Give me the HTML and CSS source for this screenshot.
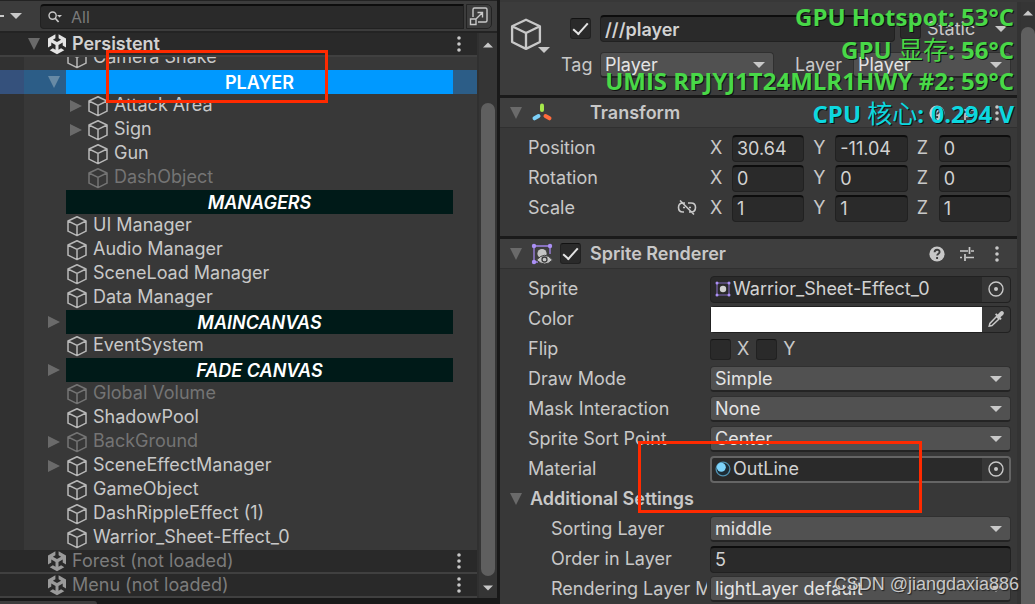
FILE: index.html
```html
<!DOCTYPE html>
<html lang="en">
<head>
<meta charset="utf-8">
<title>Editor</title>
<link rel="stylesheet" href="styles.css">
</head>
<body>
<svg class="defs" aria-hidden="true">
  <symbol id="cube" viewBox="0 0 22 22"><path d="M11 1.8 20 6v10.2L11 20.6 2 16.2V6ZM2 6l9 4.4L20 6M11 10.4v10.2" fill="none" stroke="currentColor" stroke-width="1.5" stroke-linejoin="round"/></symbol>
  <symbol id="unity" viewBox="0 0 22 22"><path d="M9.4 1.2v4L6.9 6.7l4.1 2.4 4.1-2.4-2.5-1.5v-4L20 5.6v9l-3.3-2v-3l-4.2 2.5v4.7l2.6-1.5 3.2 1.9L11 21.2l-7.3-4 3.2-1.9 2.6 1.5v-4.7L5.3 9.6v3l-3.3 2v-9Z" fill="currentColor"/></symbol>
  <symbol id="down" viewBox="0 0 12 6"><path d="M0 0h12L6 6Z" fill="currentColor"/></symbol>
  <symbol id="open" viewBox="0 0 12 12"><path d="M0 0h12L6 12Z" fill="currentColor"/></symbol>
  <symbol id="closed" viewBox="0 0 12 12"><path d="M0 0v12L12 6Z" fill="currentColor"/></symbol>
  <symbol id="dots" viewBox="0 0 4 16"><path d="M2 2v0M2 8v0M2 14v0" stroke="currentColor" stroke-width="3.6" stroke-linecap="round"/></symbol>
  <symbol id="help" viewBox="0 0 16 16"><circle cx="8" cy="8" r="7.6" fill="currentColor"/><path d="M5.6 6.2c0-3.4 5-3.2 5-.3 0 1.8-2.4 1.7-2.4 3.6M8.1 11v2" fill="none" stroke="#3c3c3c" stroke-width="1.9"/></symbol>
  <symbol id="sliders" viewBox="0 0 16 16"><path d="M1 5h8M12 5h3M10.500 1v7M1 11.500h2M7 11.500h8M6 8v7" fill="none" stroke="currentColor" stroke-width="1.7"/></symbol>
  <symbol id="target" viewBox="0 0 16 16"><circle cx="8" cy="8" r="7" fill="none" stroke="currentColor" stroke-width="1.4"/><circle cx="8" cy="8" r="2" fill="currentColor"/></symbol>
</svg>

<div class="app">
  <section class="hierarchy">
    <div class="toolbar">
      <button class="add" aria-label="Create"><span class="dash"></span><svg class="caret"><use href="#down"/></svg></button>
      <label class="search">
        <svg class="lens" viewBox="0 0 14 12"><circle cx="4.6" cy="4.6" r="3.6" fill="none" stroke="currentColor" stroke-width="1.4"/><path d="m7 7 3.6 4" stroke="currentColor" stroke-width="1.8"/><path d="M9 4h5l-2.500 2.600Z" fill="currentColor"/></svg>
        <input type="text" placeholder="All" aria-label="Search">
      </label>
      <button class="popout" aria-label="Open search window"><svg viewBox="0 0 20 20"><path d="M4 11V3.500Q4 2 5.500 2H16.500Q18 2 18 3.500V14.500Q18 16 16.500 16H9M1.500 13h5.500v5.500H1.500ZM7 13l6.500-6.500M8.500 6.500h5v5" fill="none" stroke="currentColor" stroke-width="1.4"/></svg></button>
    </div>
    <div class="tree-area">
      <div class="tree">
        <div class="scene loaded"><button class="toggle" aria-label="Collapse"><svg><use href="#open"/></svg></button><svg class="icon"><use href="#unity"/></svg><span>Persistent</span><button class="dots" aria-label="Scene menu"><svg><use href="#dots"/></svg></button></div>
        <ul class="nodes">
          <li class="node cut"><i class="toggle"></i><svg class="icon"><use href="#cube"/></svg><span>Camera Shake</span></li>
          <li class="node selected"><button class="toggle" aria-label="Collapse"><svg><use href="#open"/></svg></button><strong class="band">PLAYER</strong></li>
          <li class="node deep"><button class="toggle" aria-label="Expand"><svg><use href="#closed"/></svg></button><svg class="icon"><use href="#cube"/></svg><span>Attack Area</span></li>
          <li class="node deep"><button class="toggle" aria-label="Expand"><svg><use href="#closed"/></svg></button><svg class="icon"><use href="#cube"/></svg><span>Sign</span></li>
          <li class="node deep"><i class="toggle"></i><svg class="icon"><use href="#cube"/></svg><span>Gun</span></li>
          <li class="node deep off"><i class="toggle"></i><svg class="icon"><use href="#cube"/></svg><span>DashObject</span></li>
          <li class="node"><i class="toggle"></i><strong class="band">MANAGERS</strong></li>
          <li class="node"><i class="toggle"></i><svg class="icon"><use href="#cube"/></svg><span>UI Manager</span></li>
          <li class="node"><i class="toggle"></i><svg class="icon"><use href="#cube"/></svg><span>Audio Manager</span></li>
          <li class="node"><i class="toggle"></i><svg class="icon"><use href="#cube"/></svg><span>SceneLoad Manager</span></li>
          <li class="node"><i class="toggle"></i><svg class="icon"><use href="#cube"/></svg><span>Data Manager</span></li>
          <li class="node"><button class="toggle" aria-label="Expand"><svg><use href="#closed"/></svg></button><strong class="band">MAINCANVAS</strong></li>
          <li class="node"><i class="toggle"></i><svg class="icon"><use href="#cube"/></svg><span>EventSystem</span></li>
          <li class="node"><button class="toggle" aria-label="Expand"><svg><use href="#closed"/></svg></button><strong class="band">FADE CANVAS</strong></li>
          <li class="node off"><i class="toggle"></i><svg class="icon"><use href="#cube"/></svg><span>Global Volume</span></li>
          <li class="node"><i class="toggle"></i><svg class="icon"><use href="#cube"/></svg><span>ShadowPool</span></li>
          <li class="node off"><button class="toggle" aria-label="Expand"><svg><use href="#closed"/></svg></button><svg class="icon"><use href="#cube"/></svg><span>BackGround</span></li>
          <li class="node"><button class="toggle" aria-label="Expand"><svg><use href="#closed"/></svg></button><svg class="icon"><use href="#cube"/></svg><span>SceneEffectManager</span></li>
          <li class="node"><i class="toggle"></i><svg class="icon"><use href="#cube"/></svg><span>GameObject</span></li>
          <li class="node"><i class="toggle"></i><svg class="icon"><use href="#cube"/></svg><span>DashRippleEffect (1)</span></li>
          <li class="node"><i class="toggle"></i><svg class="icon"><use href="#cube"/></svg><span>Warrior_Sheet-Effect_0</span></li>
        </ul>
        <div class="scene"><i class="toggle"></i><svg class="icon"><use href="#unity"/></svg><span>Forest (not loaded)</span><button class="dots" aria-label="Scene menu"><svg><use href="#dots"/></svg></button></div>
        <div class="scene"><i class="toggle"></i><svg class="icon"><use href="#unity"/></svg><span>Menu (not loaded)</span><button class="dots" aria-label="Scene menu"><svg><use href="#dots"/></svg></button></div>
      </div>
      <div class="scrollbar">
        <svg class="caret up"><use href="#down"/></svg>
        <div class="thumb"></div>
        <svg class="caret"><use href="#down"/></svg>
      </div>
    </div>
    <div class="dock"><div class="dock-tab"></div></div>
  </section>

  <section class="inspector">
    <div class="props">
      <header class="object">
        <button class="object-icon" aria-label="Object icon"><svg class="big"><use href="#cube"/></svg><svg class="caret small"><use href="#down"/></svg></button>
        <div class="object-fields">
          <div class="line">
            <input type="checkbox" class="check" checked aria-label="Active">
            <input type="text" class="text name" value="///player" aria-label="Name">
            <label class="static"><input type="checkbox" class="check">Static</label>
            <svg class="caret static-caret"><use href="#down"/></svg>
          </div>
          <div class="line">
            <label class="tag" for="tag">Tag</label>
            <span class="pick tag-pick"><select id="tag"><option>Player</option></select><svg class="caret"><use href="#down"/></svg></span>
            <label class="layer" for="layer">Layer</label>
            <span class="pick layer-pick"><select id="layer"><option>Player</option></select><svg class="caret"><use href="#down"/></svg></span>
          </div>
        </div>
      </header>

      <header class="component">
        <button class="toggle" aria-label="Collapse"><svg><use href="#open"/></svg></button>
        <svg class="kind" viewBox="0 0 22 22"><g stroke-width="4" stroke-linecap="round"><path d="M11 3.500v4.500" stroke="#a5e84b"/><path d="m7.500 14-4 2.300" stroke="#7cd0f8"/><path d="m14.500 14 4 2.300" stroke="#ff6b3d"/></g></svg>
        <h2 class="after-blank">Transform</h2>
        <span class="tools"><svg class="tool"><use href="#help"/></svg><svg class="tool"><use href="#sliders"/></svg><svg class="more"><use href="#dots"/></svg></span>
      </header>
      <div class="body transform">
        <div class="row"><span class="label">Position</span><div class="vector"><label>X<input class="text" value="30.64"></label><label>Y<input class="text" value="-11.04"></label><label>Z<input class="text" value="0"></label></div></div>
        <div class="row"><span class="label">Rotation</span><div class="vector"><label>X<input class="text" value="0"></label><label>Y<input class="text" value="0"></label><label>Z<input class="text" value="0"></label></div></div>
        <div class="row"><span class="label">Scale<svg class="unlink" viewBox="0 0 20 16"><path d="M8 3H6Q1.500 3 1.500 7.500T6 12H7M11 3h3q4.500 0 4.500 4.500T14 12h-2M6 7.500h2M12 7.500h2M3 .5l14 14" fill="none" stroke="currentColor" stroke-width="1.600"/></svg></span><div class="vector"><label>X<input class="text" value="1"></label><label>Y<input class="text" value="1"></label><label>Z<input class="text" value="1"></label></div></div>
      </div>

      <header class="component">
        <button class="toggle" aria-label="Collapse"><svg><use href="#open"/></svg></button>
        <svg class="kind" viewBox="0 0 22 22"><path d="M3 3h16v8M3 3v16h4" fill="none" stroke="#a184e8" stroke-width="1.300"/><g fill="#ab90f5"><circle cx="3" cy="3" r="2.200"/><circle cx="19" cy="3" r="2.200"/><circle cx="3" cy="19" r="2.200"/></g><circle cx="11" cy="10.500" r="4.600" fill="#c4c4c4"/><path d="M5.500 17q8.500-9.500 16 0-7.500 8-16 0Z" fill="#c4c4c4" stroke="#3c3c3c"/><circle cx="13.500" cy="16.500" r="2.500" fill="none" stroke="#3c3c3c" stroke-width="1.300"/></svg>
        <input type="checkbox" class="check" checked aria-label="Enable Sprite Renderer">
        <h2>Sprite Renderer</h2>
        <span class="tools"><svg class="tool"><use href="#help"/></svg><svg class="tool"><use href="#sliders"/></svg><svg class="more"><use href="#dots"/></svg></span>
      </header>
      <div class="body">
        <div class="row"><span class="label">Sprite</span><div class="object-ref"><svg class="mini" viewBox="0 0 16 16"><path d="M2 2h12v12H2Z" fill="none" stroke="#7d67b5" stroke-width="1.200"/><g fill="#ab90f5"><circle cx="2" cy="2" r="1.500"/><circle cx="14" cy="2" r="1.500"/><circle cx="2" cy="14" r="1.500"/><circle cx="14" cy="14" r="1.500"/></g><circle cx="8" cy="8" r="3.200" fill="#d0d0d0"/></svg><span>Warrior_Sheet-Effect_0</span><button aria-label="Select sprite"><svg><use href="#target"/></svg></button></div></div>
        <div class="row"><span class="label">Color</span><div class="object-ref color"><button class="swatch" aria-label="Color"></button><button aria-label="Pick color"><svg viewBox="0 0 16 16"><path d="m8.500 5.500 2.500 2.500-7 6.500-2.800.6.700-2.700Z" fill="none" stroke="currentColor" stroke-width="1.500"/><path d="M7 3.500 8.200 2.300 9.700 3.600 12 1q2-1.600 3.300-.3T15 4l-2.600 2.300 1.300 1.500L12.500 9Z" fill="currentColor"/></svg></button></div></div>
        <div class="row"><span class="label">Flip</span><div class="flip"><label><input type="checkbox" class="check">X</label><label><input type="checkbox" class="check">Y</label></div></div>
        <div class="row"><label class="label" for="mode">Draw Mode</label><span class="pick"><select id="mode"><option>Simple</option></select><svg class="caret"><use href="#down"/></svg></span></div>
        <div class="row"><label class="label" for="mask">Mask Interaction</label><span class="pick"><select id="mask"><option>None</option></select><svg class="caret"><use href="#down"/></svg></span></div>
        <div class="row"><label class="label" for="sort">Sprite Sort Point</label><span class="pick"><select id="sort"><option>Center</option></select><svg class="caret"><use href="#down"/></svg></span></div>
        <div class="row"><span class="label">Material</span><div class="object-ref focus"><svg class="mini" viewBox="0 0 16 16"><circle cx="8" cy="8" r="6.900" fill="#1d2c36" stroke="#4f8fae" stroke-width="1.300"/><circle cx="6.300" cy="6.300" r="4.500" fill="#7dd3fa"/></svg><span>OutLine</span><button aria-label="Select material"><svg><use href="#target"/></svg></button></div></div>
        <div class="row group"><button class="toggle" aria-label="Collapse"><svg><use href="#open"/></svg></button><h3>Additional Settings</h3></div>
        <div class="row"><label class="label nested" for="slayer">Sorting Layer</label><span class="pick"><select id="slayer"><option>middle</option></select><svg class="caret"><use href="#down"/></svg></span></div>
        <div class="row"><label class="label nested" for="order">Order in Layer</label><input class="text wide" id="order" value="5"></div>
        <div class="row"><label class="label nested" for="rmask">Rendering Layer Mask</label><span class="pick"><select id="rmask"><option>lightLayer default</option></select><svg class="caret"><use href="#down"/></svg></span></div>
      </div>
    </div>
    <div class="scrollbar right">
      <svg class="caret up"><use href="#down"/></svg>
      <div class="thumb"></div>
    </div>
  </section>
</div>

<div class="mark mark-player"></div>
<div class="mark mark-material"></div>
<div class="monitor">
  <div>GPU Hotspot: 53°C</div>
  <div>GPU <span class="han">显存</span>: 56°C</div>
  <div>UMIS RPJYJ1T24MLR1HWY #2: 59°C</div>
  <div class="cpu">CPU <span class="han">核心</span>: 0.294 V</div>
</div>
<div class="watermark">CSDN @jiangdaxia886</div>
</body>
</html>
```
FILE: styles.css
```css
* { box-sizing: border-box; }
body {
  margin: 0;
  background: #191919;
  color: #c8c8c8;
  font: 18px/24px Inter, "Noto Sans CJK SC", sans-serif;
  overflow: hidden;
}
button, input, select { font: inherit; color: inherit; margin: 0; }
button { padding: 0; border: 0; background: none; display: flex; align-items: center; justify-content: center; }
h2, h3 { margin: 0; font-size: 18px; font-weight: 600; }
svg { flex: none; display: block; }
.defs { position: absolute; width: 0; height: 0; }

.app { display: grid; grid-template-columns: 497fr 538fr; height: 100vh; overflow: hidden; }
.caret { width: 12px; height: 6px; color: #c8c8c8; }
.up { transform: rotate(180deg); }
.toggle { width: 16px; height: 22px; flex: none; color: #6a6a6a; }
.toggle svg { width: 12px; height: 12px; }

/* Hierarchy */
.hierarchy { display: flex; flex-direction: column; min-width: 0; background: #383838; }
.toolbar {
  display: flex; align-items: center; height: 33px; flex: none; padding-right: 5px;
  background: #3c3c3c; border-top: 1px solid #232323; border-bottom: 2px solid #232323;
}
.add { width: 40px; justify-content: flex-start; gap: 6px; }
.dash { width: 4px; height: 2px; background: #c8c8c8; }
.search {
  display: flex; align-items: center; flex: 1; height: 25px; gap: 9px; padding-left: 7px; margin-right: 2px;
  background: #2a2a2a; border: 1px solid #212121; border-top: 2px solid #0d0d0d; border-radius: 4px 0 0 4px;
}
.lens { width: 14px; height: 12px; }
.search input { flex: 1; min-width: 0; padding: 0; border: 0; background: none; outline: 0; font-size: 16px; }
.search input::placeholder { color: #7a7a7a; opacity: 1; }
.popout { width: 26px; height: 25px; border: 1px solid #232323; border-radius: 0 5px 5px 0; }
.popout svg { width: 20px; height: 20px; }

.tree-area { display: flex; flex: 1; min-height: 0; }
.tree { flex: 1; min-width: 0; }
.scene {
  display: flex; align-items: center; height: 24px; padding: 0 16px 0 26px;
  background: #292929; border-bottom: 2px solid #404040; color: #7c7c7c;
}
.scene .icon { margin: 0 4px; width: 22px; height: 22px; color: #9a9a9a; }
.loaded { color: #d2d2d2; font-weight: 600; }
.loaded .icon { color: #e4e4e4; }
.dots { margin-left: auto; width: 4px; height: 16px; color: #c8c8c8; }
.dots svg { width: 4px; height: 16px; }

.nodes { margin: 0; padding: 0; list-style: none; overflow: hidden; background: linear-gradient(90deg, #313131 24px, #383838 24px); }
.node { display: flex; align-items: center; height: 24px; padding-left: 46px; white-space: nowrap; }
.node span { padding-bottom: 2px; }
.node .icon { width: 22px; height: 22px; margin: 0 5px 0 4px; color: #b8b8b8; }
.deep { padding-left: 68px; }
.deep .icon { margin-left: 3px; }
.cut { margin-top: -11px; }
.off, .off .icon { color: #747474; }
.band {
  flex: 1; height: 24px; margin: 0 24px 0 4px; padding-top: 1px; background: #001a18; color: #fff;
  font-style: italic; font-weight: 600; text-align: center;
}
.selected { background: linear-gradient(90deg, #35517c 24px, #2c5d87 24px); }
.selected .band { background: #0099ff; font-style: normal; }
.selected .toggle { color: #688aa5; }

.scrollbar { display: flex; flex-direction: column; align-items: center; flex: none; width: 20px; padding: 9px 0 7px; background: #353535; border-left: 2px solid #303030; }
.thumb { flex: 1; width: 14px; margin: 55px 0 9px; border-radius: 7px; background: #5f5f5f; }
.scrollbar .caret { width: 10px; }
.dock { height: 6px; flex: none; padding-top: 3px; background: #191919; }
.dock-tab { width: 97px; height: 3px; border-radius: 0 4px 0 0; background: #3c3c3c; }

/* Inspector */
.inspector { display: flex; min-width: 0; padding-top: 2px; border-left: 3px solid #191919; background: #383838; overflow: hidden; }
.props { flex: 1; min-width: 0; }
.object { display: flex; height: 93px; padding: 13px 6px 0 10px; background: #3c3c3c; }
.object-icon { position: relative; width: 32px; height: 38px; margin-right: 19px; }
.big { width: 34px; height: 34px; }
.small { position: absolute; right: -8px; bottom: 0; }
.object-fields { display: grid; grid-template-columns: minmax(0, 1fr); flex: 1; min-width: 0; gap: 9px; align-content: start; }
.line { display: flex; align-items: center; height: 27px; }
.line > .check { margin-left: 9px; }
.name { flex: 1; font-weight: 600; margin: 0 5px 0 9px; }
.static { display: flex; align-items: center; gap: 6px; width: 91px; }
.static-caret { margin-right: 4px; margin-left: 4px; }
.tag { width: 39px; }
.tag-pick { margin-right: 21px; }
.layer { width: 58px; }
.pick.layer-pick { flex: 0 1 158px; }

.check {
  appearance: none; flex: none; width: 21px; height: 21px; display: grid; place-items: center;
  background: #2a2a2a; border: 1px solid #212121; border-top-color: #121212; border-radius: 3px;
}
.check:checked::after { content: ""; width: 13px; height: 6px; border-left: 2px solid #e4e4e4; border-bottom: 2px solid #e4e4e4; transform: rotate(-48deg); margin-bottom: 4px; }
.text {
  min-width: 0; height: 27px; padding: 0 4px; outline: 0; color: #d2d2d2;
  background: #2a2a2a; border: 1px solid #212121; border-top: 2px solid #0d0d0d; border-radius: 4px;
}
.pick { position: relative; display: flex; flex: 1; min-width: 0; height: 26px; }
.pick select {
  appearance: none; width: 100%; height: 26px; padding: 0 24px 0 4px; outline: 0; color: #e4e4e4;
  background: #515151; border: 1px solid #303030; border-bottom: 2px solid #242424; border-radius: 4px;
}
.pick .caret { position: absolute; right: 9px; top: 10px; pointer-events: none; }

.component {
  display: flex; align-items: center; height: 33px; padding: 0 18px 0 8px;
  background: #3e3e3e; border-top: 3px solid #1a1a1a; border-bottom: 1px solid #303030;
}
.component .kind { width: 22px; height: 22px; margin: 0 7px; }
.component h2 { margin-left: 9px; }
.component .after-blank { margin-left: 30px; }
.tools { display: flex; gap: 14px; margin-left: auto; }
.tool { width: 16px; height: 16px; }
.more { width: 4px; height: 16px; margin-left: 6px; }

.body { padding: 5px 6px 0 28px; }
.transform { padding-bottom: 13px; }
.row { display: flex; align-items: center; height: 30px; }
.label { display: flex; align-items: center; flex: none; width: 182px; white-space: nowrap; overflow: hidden; }
.nested { width: 179px; padding-left: 23px; margin-right: 3px; }
.unlink { width: 20px; height: 16px; margin-left: auto; margin-right: 13px; }
.vector { display: flex; flex: 1; gap: 9px; min-width: 0; }
.vector label { display: grid; grid-template-columns: 22px 1fr; align-items: center; flex: 1; min-width: 0; }
.vector .text { width: 100%; }
.object-ref {
  display: flex; align-items: center; flex: 1; height: 27px; padding-left: 4px;
  background: #2a2a2a; border: 1px solid #212121; border-radius: 4px; color: #d2d2d2;
}
.object-ref > button { width: 28px; height: 25px; margin-left: auto; background: #373737; border-radius: 0 4px 4px 0; color: #c8c8c8; }
.object-ref > button svg { width: 16px; height: 16px; }
.mini { width: 16px; height: 16px; margin-right: 2px; }
.focus { border: 2px solid #656565; padding-left: 3px; }
.focus > button { width: 27px; height: 23px; }
.color { padding: 0; }
.color > .swatch { flex: 1; margin: 0; background: #fff; border-radius: 0; }
.flip { display: flex; gap: 7px; }
.flip label { display: flex; align-items: center; gap: 6px; }
.wide { flex: 1; }
.group { height: 30px; margin-left: -20px; }
.group h3 { margin-left: 6px; }
.right { width: 18px; padding: 8px 0 0; border-left: 4px solid #333; }
.right .thumb { margin: 11px 0 0; border-radius: 7px 7px 0 0; }

/* Layers above the editor */
.mark { position: absolute; border: 3px solid #ff2a00; pointer-events: none; }
.mark-player { left: 106px; top: 50px; width: 222px; height: 53px; }
.mark-material { left: 638px; top: 441px; width: 284px; height: 72px; }
.monitor {
  position: absolute; top: 1px; right: 21px; text-align: right; pointer-events: none; white-space: nowrap;
  font: 700 24px/32px "Open Sans", "Noto Sans CJK SC", sans-serif; color: #48d848; text-shadow: 1px 1px 0 #111;
}
.monitor > div { height: 32px; }
.han { font-size: 25px; font-weight: 400; }
.cpu { color: #0cd8e0; }
.watermark {
  position: absolute; right: 16px; bottom: 8px; font: 18px/24px "Liberation Sans", sans-serif;
  color: #c9c9c9; text-shadow: 1px 1px 1px #222; pointer-events: none;
}
```
